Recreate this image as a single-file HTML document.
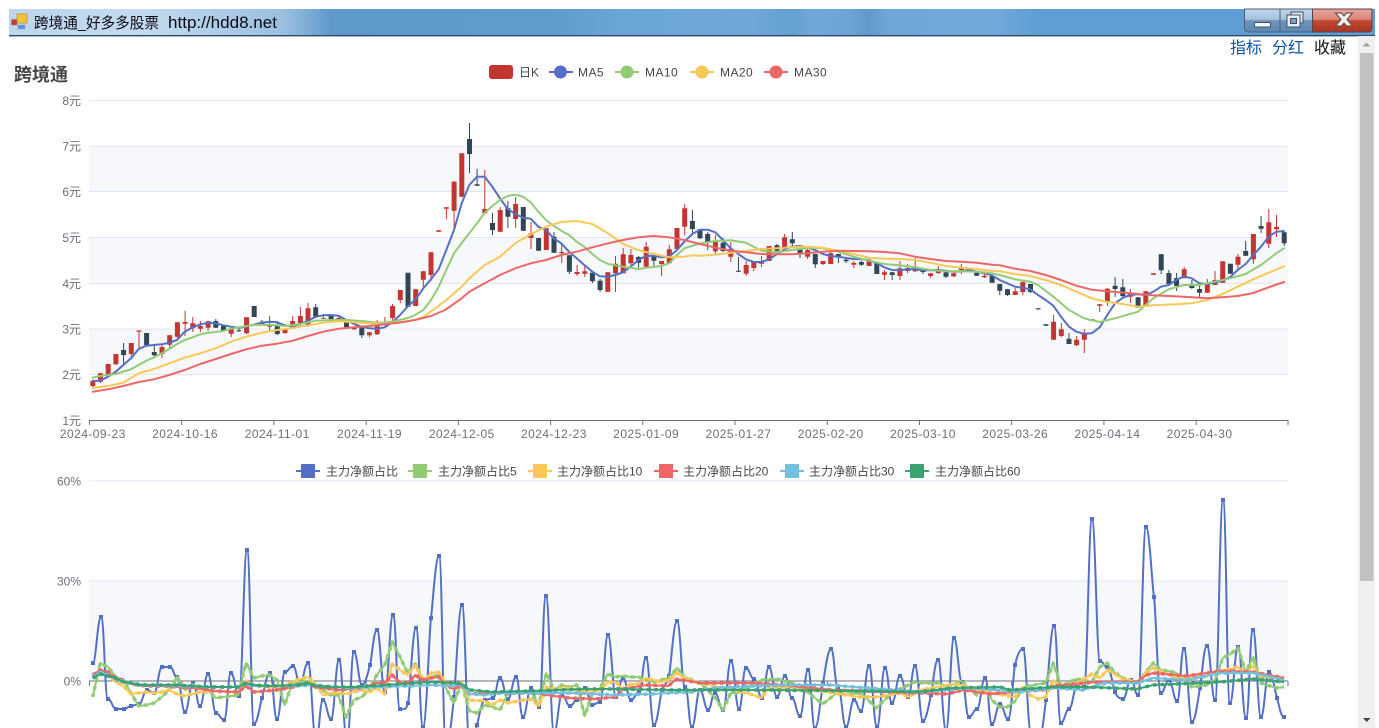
<!DOCTYPE html>
<html lang="zh-CN">
<head>
<meta charset="utf-8">
<title>跨境通_好多多股票</title>
<style>
html,body{margin:0;padding:0;background:#fff;width:1379px;height:728px;overflow:hidden}
svg{display:block;position:absolute;left:0;top:0}
text{font-family:"Liberation Sans","Noto Sans CJK SC",sans-serif}
.ax{font-size:12px;fill:#6e7079}
.lg{font-size:12px;fill:#464646}
.ls{letter-spacing:.45px}
.lk{font-size:16px;font-family:"WenQuanYi Zen Hei","Noto Sans CJK SC",sans-serif}
</style>
</head>
<body>
<svg width="1379" height="728" viewBox="0 0 1379 728" xmlns="http://www.w3.org/2000/svg">
<defs>
<linearGradient id="tb" x1="0" x2="1379" y1="0" y2="0" gradientUnits="userSpaceOnUse">
<stop offset="0" stop-color="#bcd6ec"/>
<stop offset=".1" stop-color="#c4dbef"/>
<stop offset=".205" stop-color="#9cc0e0"/>
<stop offset=".24" stop-color="#5f9acb"/>
<stop offset=".4" stop-color="#5f9bcd"/>
<stop offset=".45" stop-color="#6ba5d8"/>
<stop offset=".545" stop-color="#70a7d9"/>
<stop offset=".575" stop-color="#64a0d2"/>
<stop offset=".59" stop-color="#70a8dc"/>
<stop offset=".615" stop-color="#6ea4d6"/>
<stop offset=".63" stop-color="#6199cb"/>
<stop offset=".645" stop-color="#70a7da"/>
<stop offset=".725" stop-color="#70a8da"/>
<stop offset=".75" stop-color="#5f9ed4"/>
<stop offset="1" stop-color="#5f9ed4"/>
</linearGradient>
<linearGradient id="bb" x1="0" x2="0" y1="0" y2="1">
<stop offset="0" stop-color="#bfd6ea"/><stop offset=".45" stop-color="#a6c2dc"/><stop offset=".5" stop-color="#6f95bb"/><stop offset="1" stop-color="#5b87b4"/>
</linearGradient>
<linearGradient id="bc" x1="0" x2="0" y1="0" y2="1">
<stop offset="0" stop-color="#e6a89f"/><stop offset=".45" stop-color="#d98678"/><stop offset=".5" stop-color="#c54a33"/><stop offset="1" stop-color="#a93522"/>
</linearGradient>
<marker id="mb" markerUnits="userSpaceOnUse" markerWidth="4" markerHeight="4" refX="2" refY="2"><rect width="4" height="4" fill="#5470c6"/></marker>
</defs>

<!-- title bar -->
<rect x="9" y="9" width="1366" height="26" fill="url(#tb)"/>
<rect x="9" y="35" width="1366" height="1.4" fill="#2c4a6b"/>
<rect x="17" y="14" width="10" height="9" fill="#f6c23c" stroke="#b98a20" stroke-width=".7"/>
<rect x="11.5" y="19.5" width="5.5" height="5.5" fill="#d8322a" stroke="#8a8a8a" stroke-width=".6"/>
<rect x="18" y="25" width="7" height="4" fill="#5c8fe0" stroke="#8aa0c8" stroke-width=".5"/>
<text x="34" y="28" font-size="15" fill="#0a0a14" textLength="125" lengthAdjust="spacingAndGlyphs">跨境通_好多多股票</text>
<text x="168" y="28" font-size="16.5" fill="#0a0a14" textLength="109" lengthAdjust="spacingAndGlyphs">http://hdd8.net</text>
<!-- window buttons -->
<path d="M1244.5 9V28q0 4 4 4H1280V9z" fill="url(#bb)" stroke="#4c6078"/>
<rect x="1280" y="9" width="32.5" height="23" fill="url(#bb)" stroke="#4c6078"/>
<path d="M1312.5 9V32H1368q4 0 4-4V9z" fill="url(#bc)" stroke="#5a4048"/>
<rect x="1254.500" y="22.500" width="16" height="4.500" rx="1" fill="#f4f6f8" stroke="#3f5068"/>
<rect x="1291" y="12" width="12" height="11" fill="#dde6ee" stroke="#3f5068"/>
<rect x="1287" y="15" width="13" height="12" fill="#e8eef4" stroke="#3f5068"/>
<rect x="1290.500" y="18.500" width="6" height="5" fill="#7c9cbc" stroke="#3f5068"/>
<path d="M1335.500 13h6l2.500 3 2.500-3h6l-5.500 6.500 5.500 6.500h-6l-2.500-3-2.500 3h-6l5.500-6.500z" fill="#f4f0f0" stroke="#59403c"/>

<!-- links -->
<text class="lk" x="1230" y="53" fill="#0a55a6">指标</text>
<text class="lk" x="1272" y="53" fill="#0a55a6">分红</text>
<text class="lk" x="1314" y="53" fill="#111">收藏</text>

<!-- scrollbar -->
<rect x="1358" y="36" width="17" height="692" fill="#f0f0f0"/>
<rect x="1360" y="53" width="13.500" height="528" fill="#c1c1c1"/>
<path d="M1366.500 42.500l4 4h-8z" fill="#a3a3a3"/>
<path d="M1363 718h7.500l-3.750 4z" fill="#404040"/>

<!-- title -->
<text x="14" y="81" font-size="18" font-weight="700" fill="#464646">跨境通</text>

<!-- top legend -->
<rect x="489" y="65" width="24" height="14" rx="3" fill="#c23531"/>
<text class="lg" x="519" y="76.500">日K</text>
<path d="M549 72h24" stroke="#5470c6" stroke-width="2"/><circle cx="560.500" cy="72" r="6.500" fill="#5470c6"/>
<text class="lg ls" x="578" y="76.500">MA5</text>
<path d="M615 72h24" stroke="#91cc75" stroke-width="2"/><circle cx="627" cy="72" r="6.500" fill="#91cc75"/>
<text class="lg ls" x="645" y="76.500">MA10</text>
<path d="M690 72h24" stroke="#fac858" stroke-width="2"/><circle cx="702" cy="72" r="6.500" fill="#fac858"/>
<text class="lg ls" x="720" y="76.500">MA20</text>
<path d="M764 72h24" stroke="#ee6666" stroke-width="2"/><circle cx="776" cy="72" r="6.500" fill="#ee6666"/>
<text class="lg ls" x="794" y="76.500">MA30</text>

<!-- main chart grid -->
<g fill="#f6f8fc">
<rect x="89" y="146" width="1199" height="45.500"/>
<rect x="89" y="237" width="1199" height="46"/>
<rect x="89" y="329" width="1199" height="45.500"/>
</g>
<path d="M89 100.500H1288M89 146H1288M89 191.500H1288M89 237.500H1288M89 283.500H1288M89 329H1288M89 374.500H1288" stroke="#e0e6f1" fill="none"/>
<path d="M89 420.500H1288M89.500 420v5M181.700 420v5M273.900 420v5M366.200 420v5M458.400 420v5M550.600 420v5M642.800 420v5M735 420v5M827.300 420v5M919.500 420v5M1011.700 420v5M1103.900 420v5M1196.200 420v5M1288 420v5" stroke="#6e7079" fill="none"/>
<g class="ax" text-anchor="end">
<text class="ax" x="81" y="105">8元</text>
<text class="ax" x="81" y="150.500">7元</text>
<text class="ax" x="81" y="196">6元</text>
<text class="ax" x="81" y="242">5元</text>
<text class="ax" x="81" y="288">4元</text>
<text class="ax" x="81" y="333.500">3元</text>
<text class="ax" x="81" y="379">2元</text>
<text class="ax" x="81" y="425">1元</text>
</g>
<g class="ax" text-anchor="middle" letter-spacing=".45">
<text class="ax" x="92.800" y="438">2024-09-23</text>
<text class="ax" x="185.100" y="438">2024-10-16</text>
<text class="ax" x="277.300" y="438">2024-11-01</text>
<text class="ax" x="369.500" y="438">2024-11-19</text>
<text class="ax" x="461.800" y="438">2024-12-05</text>
<text class="ax" x="554" y="438">2024-12-23</text>
<text class="ax" x="646.200" y="438">2025-01-09</text>
<text class="ax" x="738.500" y="438">2025-01-27</text>
<text class="ax" x="830.700" y="438">2025-02-20</text>
<text class="ax" x="922.900" y="438">2025-03-10</text>
<text class="ax" x="1015.200" y="438">2025-03-26</text>
<text class="ax" x="1107.400" y="438">2025-04-14</text>
<text class="ax" x="1199.600" y="438">2025-04-30</text>
</g>

<!-- candle wicks -->
<path stroke="#c23531" stroke-width="1" fill="none" d="M92.8 379.500V389M100.500 373V383M108.200 364V375M115.900 354V365M131.300 343V356.700M139 331V350M162 345V358M169.700 335V349M177.400 322V340M185.100 311V336M192.800 317V332M200.400 321V332M208.100 321V331M231.200 329V337M246.600 317V334M269.600 316V331M285 329V334M292.700 316V328M300.400 307V326M308 303V327M323.400 314V319M338.800 316V322M354.200 327V330M369.500 332V337M377.200 320V335M384.900 317V326M392.600 304V322M400.300 290V303M415.700 289V306M423.300 271V288M431 252V281M438.700 230V232M446.400 207V219M454.100 181V228M461.800 153V197M484.800 170V213M500.200 207V232M515.600 197V228M531 222V249M546.300 228V250M561.700 244V263M577.100 265V276M584.800 265V277M607.800 272V292M615.500 256V292M623.200 248V273M630.900 249V266M646.200 242V267M661.600 261V276M669.300 245V264M677 228V249M684.700 204V235M715.400 235V254M730.800 242V262M746.200 261V276M753.800 262V271M761.500 256V267M769.200 246V261M784.600 234V248M807.600 248V259M823 261V265M830.700 252V264M853.800 261V268M869.100 261V266M884.500 270V280M899.900 261V280M907.600 264V273M915.200 258V272M930.600 273V278M938.300 266V274M953.700 273V277M961.400 264V274M984.400 273V278M1015.200 288V295M1022.800 280V295M1053.600 315V340M1061.300 323V337M1076.600 336V346M1084.300 329V353M1092 319V321M1099.700 304V312M1107.400 288V306M1130.400 289V303M1145.800 291V307M1153.500 273V275M1184.200 267V278M1207.300 279V293M1215 271V285M1222.700 261V283M1238 254V270M1253.400 234V264M1268.800 209V248M1276.500 215V237"/>
<path stroke="#314656" stroke-width="1" fill="none" d="M123.600 343V365M146.600 333V345M154.300 345V357M215.800 319V328M223.500 326V332M238.900 327V332M254.200 306V317M261.900 320V324M277.300 321V335M315.700 304V318M331.100 316V320M346.500 320V327M361.800 327V338M408 273V307M469.500 123V173M477.100 169V186M492.500 213V235M507.900 201V228M523.300 207V231M538.600 238V251M554 232V253M569.400 255V274M592.400 273V283M600.100 279V292M638.600 256V268M653.900 253V268M692.400 210V233M700 229V239M707.700 232V250M723.100 238V252M738.500 257V272M776.900 244V253M792.300 232V246M800 246V258M815.300 254V268M838.400 254V263M846.100 258V263M861.400 261V266M876.800 262V274M892.200 272V280M922.900 270V274M946 272V278M969 268V270M976.700 272V276M992.100 276V283M999.800 284V295M1007.500 289V296M1030.500 284V293M1038.200 308V310M1045.900 324V326M1069 333V344M1115.100 277V297M1122.800 279V298M1138.100 297V308M1161.200 254V274M1168.900 270V285M1176.600 273V291M1191.900 280V289M1199.600 286V297M1230.400 264V274M1245.700 241V256M1261.100 216V233M1284.200 232V246"/>
<!-- candle bodies -->
<path stroke="#c23531" stroke-width="5" fill="none" d="M92.800 381V386M100.500 373.300V381.700M108.200 364V374.300M115.900 354V364.300M131.300 343V354M139 330.500V331.700M162 347V354M169.700 335.300V344.700M177.400 322.300V336.700M185.100 322V323.700M192.800 323.300V328.300M200.400 326V328.700M208.100 321.300V327.700M231.200 329V333.700M246.600 317.300V333.300M269.600 324V326.700M285 329.300V333M292.700 321V328M300.400 316V323.300M308 308.300V326M323.400 318V318.800M338.800 318V320.700M354.200 327.300V329.300M369.500 332.300V335.300M377.200 324V334.300M384.900 322.700V325M392.600 306V318M400.300 290V300M415.700 289.300V306M423.300 271.300V279.700M431 252.300V275M438.700 230.300V231.700M446.400 207.300V208.700M454.100 181.700V210.700M461.800 153.300V196.700M484.800 209V213.300M500.200 210V231.700M515.600 204V219M531 233.300V238M546.300 228.300V250M561.700 252V253.300M577.100 272V274M584.800 271.300V273.700M607.800 272.300V291.700M615.500 263.700V273.300M623.200 254.300V273.300M630.900 255V263.300M646.200 246.700V266.700M661.600 261V264M669.300 249.300V263.300M677 228V249M684.700 208.300V226.700M715.400 241.700V251.300M730.800 248.700V256.700M746.200 265V273.700M753.800 261.700V268M761.500 262.300V263.700M769.200 246V261M784.600 237.300V247.300M807.600 250V256.700M823 261V264M830.700 253.300V264M853.800 263V264.700M869.100 261.300V266M884.500 272.300V274.700M899.900 268.300V276M907.600 268V271M915.200 266.700V271.300M930.600 273.300V276M938.300 270.300V273M953.700 273.300V276.300M961.400 267.300V270M984.400 275.700V277.300M1015.200 291.300V295M1022.800 282V292M1053.600 321.700V339.700M1061.300 329.300V336M1076.600 339.700V345.300M1084.300 333.300V339.700M1092 319V321M1099.700 304.300V305.700M1107.400 288.700V301.700M1130.400 294V296.700M1145.800 291.300V306.700M1153.500 273.300V274.700M1184.200 269.300V278.300M1207.300 283.300V292.700M1215 280V285M1222.700 261.300V282.700M1238 256.700V264.700M1253.400 234V259.300M1268.800 222.300V243.700M1276.500 227V229.300"/>
<path stroke="#314656" stroke-width="5" fill="none" d="M123.600 350V355M146.600 333V345M154.300 352V355.300M215.800 321V327.700M223.500 326V330.700M238.900 330.300V331.300M254.200 306V317M261.900 321.700V324M277.300 325V334M315.700 307.300V317.300M331.100 316V319.300M346.500 320V327.300M361.800 326.700V335.300M408 272.700V306.700M469.500 139V154M477.100 184.300V185.700M492.500 223V230M507.900 208.300V216.700M523.300 207V230.700M538.600 238V250.700M554 236.700V252.700M569.400 255.300V271.700M592.400 272.700V281.300M600.100 280.700V290M638.600 257V262.700M653.900 255V260.700M692.400 221V229M700 229.300V238.300M707.700 234V242.300M723.100 242.700V251M738.500 270.800V271.700M776.900 245.300V250.700M792.300 239.300V243.300M800 246V253.300M815.300 254V264.300M838.400 254V256.700M846.100 259.700V261.300M861.400 262V264.700M876.800 262.300V274M892.200 272.300V275M922.900 270V272M946 272.300V276.700M969 268.300V270M976.700 272.700V275.700M992.100 276V282.700M999.800 284V290.700M1007.500 289.300V295M1030.500 284V292M1038.200 308.300V309.300M1045.900 324.300V325.700M1069 338.700V344M1115.100 285.700V289M1122.800 287.300V296M1138.100 297.300V307.700M1161.200 254.300V270.300M1168.900 273V284M1176.600 278V286M1191.900 285.700V288M1199.600 289V292.700M1230.400 263.700V273.700M1245.700 251V255.700M1261.100 226V228.700M1284.200 232.300V243.300"/>

<!-- MA lines -->
<g fill="none" stroke-width="2" stroke-linejoin="round" stroke-linecap="round">
<polyline stroke="#5470c6" points="92.700,381 100.300,380.700 108,376.700 115.700,371.700 123.300,365 131,358.300 138.700,349 146.300,345.700 154,345 161.700,344.300 169.300,342.700 177,340 184.700,331.700 192.700,327.300 200.300,324.300 208,323 215.700,323.300 223.300,325.300 231,326.700 238.700,327.700 246.300,326.700 254,324.700 261.700,322.700 269.300,321.700 277,322.300 284.700,325.300 292.700,326.300 300.300,324 308,320.700 315.700,316.700 323.300,315.300 331,315 338.700,315.700 346.300,320 354,324 361.700,326.700 369.300,328.300 377,328.700 384.700,327.300 392.600,322 400,315 407.500,306.700 415.700,299.300 423.300,288.300 431,279.300 438.700,269.300 446.300,250 454,230 461.700,203.300 469.300,185 477,176.700 484.700,176.700 492.300,186.700 500,198.300 507.700,209 515.300,214 523,217.700 530.700,218.700 538.300,226.700 546,230 553.700,238.300 561.300,243.300 569,251.700 576.700,258.300 584.300,265 592.300,271.700 600,276.300 608,276.700 615.300,275 623,272.300 630.700,266.700 638.300,260 646,256 653.700,255.700 661.300,257.300 669,256.700 677,250 684.300,241.700 692.300,234 700,229.800 707.700,229.700 715.300,232.300 723,240 730.700,248.300 738.300,254 746,259.300 753.700,262 761.300,262 769,259.300 776.700,254.300 784.300,249.300 792,246.700 799.700,246 807.300,247.300 815,250 822.700,254 830.700,256 838.300,256.700 846,258 853.700,259 861.300,259.300 869,260 876.700,263.300 884.300,267.300 892,270 899.700,270.300 907.300,269.300 915,269.300 923,270.300 930.300,270.300 938,270 946,270.700 953.700,271.700 961.300,271.300 969,270 976.700,271.700 984.300,273.300 992,275.300 999.700,280 1007.300,283.300 1015,286.700 1022.700,287.700 1030.300,289.300 1038,295 1045.700,300 1053.300,305.700 1061,316.700 1069,326.700 1076.300,331.700 1084,333.700 1091.700,333.300 1099.700,327.300 1107.300,315 1115,303.300 1123,297.700 1130.300,295 1138,294.300 1145.700,295 1153.300,291.700 1161,286.700 1168.700,285 1176.300,280 1184,276.300 1191.700,278.300 1199.300,283.300 1207,284 1214.700,282.700 1222.300,280.700 1230,277.300 1237.700,270 1245.700,264 1253.300,255 1261,246.700 1268.700,236.700 1276.300,231.700 1284,231"/>
<polyline stroke="#91cc75" points="92.700,377.700 100.300,376 115.700,374 131,369.300 138.700,365 146.300,360.700 154,357.300 161.700,353.300 169.300,349 177,344 184.700,340 192.700,337.300 200.300,334.300 208,332.700 215.700,332 223.300,331 231,328.700 238.700,327.300 254,325 269.300,324.700 284.700,326 300.300,324 315.700,320.700 331,320 346.300,320 361.700,321 377,322.700 384.700,322.700 392,321.500 400,320 408,318 415,315 423.300,310 431,300 438.700,286.700 446.300,270 454,253.300 461.700,243 469.300,233.300 477,223.300 484.700,212.700 492.300,206 500,200 507.700,196 515.300,194.700 523,196.700 530.700,202.300 538.300,211.700 546,220 553.700,226 561.300,230.700 569,235 576.700,241.700 584.300,246.700 592.300,254 600,260 608,264 615.300,265.300 623,266.700 630.700,267.700 638.300,269.300 646,267.700 653.700,267 661.300,266 669,263.300 677,255 684.300,248.300 692.300,245.700 700,243.500 715.300,241 730.700,240.300 746,242.700 753.700,246.700 761.300,250.700 776.700,252.300 792,250 807.300,248 822.700,248.300 838.300,251.700 853.700,256.700 869,260.700 884.300,264 899.700,265.300 915,267.300 930.300,270 946,271.300 961.300,271.300 976.700,271.700 992,273.300 1000,275 1015,279.300 1030.300,281.700 1038,285 1053.300,296.700 1069,310 1084,318.300 1099.700,322 1115,318.300 1138,311.700 1153.300,298.300 1168.700,289.300 1184,285 1199.300,285 1214.700,281.700 1230,278.300 1245.700,274 1261,265 1276.300,253.300 1284,248.300"/>
<polyline stroke="#fac858" points="92.700,388 108,386 123.300,382.700 138.700,373.300 154,369 169.300,363.300 184.700,357.700 200.300,353.300 215.700,348.300 231,341.700 246.300,336.700 261.700,332.700 277,330 292.700,328 308,325.300 323.300,322.700 338.700,321.300 354,322.300 369.300,323.300 384.700,324 400,322.500 415,320 423,317 433,310 446.300,300 461.700,286.700 469.300,278.300 484.700,265 500,256.700 515.300,243.300 530.700,234.300 546,226.700 561.300,222 576.700,221 592.300,224 608,233.300 623,244 638.300,250 653.700,254 669,257.300 684.300,256.700 692.300,255.300 700,255.800 715.300,254.700 730.700,252.700 746,251 761.300,249 776.700,248.300 792,247.300 807.300,246.700 822.700,247.700 838.300,250.700 853.700,254 869,257.700 884.300,258.700 899.700,259 915,260 930.300,262.700 946,266 961.300,267.700 976.700,269 992,271 1000,271.300 1015,274 1030.300,276 1045.700,280 1061,285 1076.300,291.700 1091.700,298.300 1107.300,302 1123,304 1138,306.700 1153.300,305.300 1176.300,304.300 1191.700,303.300 1207,300 1222.300,294 1237.700,286.700 1253.300,279.300 1268.700,272.700 1284,266.300"/>
<polyline stroke="#ee6666" points="92.700,391.700 108,389.300 123.300,386 138.700,382 154,379.300 169.300,375 184.700,370 200.300,364 215.700,359 231,354 246.300,349.300 261.700,345.700 277,343.700 292.700,340.700 308,336 323.300,331.700 338.700,328.700 354,327.300 369.300,326 384.700,324.300 400,322.500 415,320 431,316 445,310 461.700,298.300 469.300,291.700 484.700,283.300 500,275 515.300,268.300 530.700,263.300 546,260 561.300,255 576.700,251.700 592.300,247.300 608,243.300 623,240 638.300,237.300 653.700,236 669,237.300 684.300,240 700,244 715.300,247.700 730.700,250.700 746,252.300 761.300,254 776.700,254.300 792,254.300 807.300,253.300 822.700,251.700 838.300,250.700 853.700,251 869,251.300 884.300,252 899.700,253.300 915,256.700 930.300,259 946,261 961.300,261.700 976.700,262.700 992,264.700 1000,265.300 1015,268.700 1030.300,271 1045.700,275 1061,280 1076.300,285.700 1091.700,289.700 1107.300,291.300 1130.300,293.300 1153.300,295.300 1184,296.700 1207,298.300 1222.300,297.300 1237.700,296 1253.300,293 1268.700,287.300 1284,282"/>
</g>

<!-- lower legend -->
<path d="M296 471h24" stroke="#5470c6" stroke-width="2"/><rect x="301" y="464" width="14" height="14" fill="#5470c6"/>
<text class="lg" x="326" y="475.500">主力净额占比</text>
<path d="M408 471h24" stroke="#91cc75" stroke-width="2"/><rect x="413" y="464" width="14" height="14" fill="#91cc75"/>
<text class="lg" x="438" y="475.500">主力净额占比5</text>
<path d="M528 471h24" stroke="#fac858" stroke-width="2"/><rect x="533" y="464" width="14" height="14" fill="#fac858"/>
<text class="lg" x="557" y="475.500">主力净额占比10</text>
<path d="M654 471h24" stroke="#ee6666" stroke-width="2"/><rect x="659" y="464" width="14" height="14" fill="#ee6666"/>
<text class="lg" x="683" y="475.500">主力净额占比20</text>
<path d="M780 471h24" stroke="#73c0de" stroke-width="2"/><rect x="785" y="464" width="14" height="14" fill="#73c0de"/>
<text class="lg" x="809" y="475.500">主力净额占比30</text>
<path d="M905 471h24" stroke="#3ba272" stroke-width="2"/><rect x="910" y="464" width="14" height="14" fill="#3ba272"/>
<text class="lg" x="935" y="475.500">主力净额占比60</text>

<!-- lower chart grid -->
<rect x="89" y="581" width="1199" height="100" fill="#f6f8fc"/>
<path d="M89 481H1288M89 581H1288" stroke="#e0e6f1" fill="none"/>
<text class="ax" x="81" y="485.500" text-anchor="end">60%</text>
<text class="ax" x="81" y="585.500" text-anchor="end">30%</text>
<text class="ax" x="81" y="685.500" text-anchor="end">0%</text>
<path d="M89 681H1288M89.500 681v5M181.700 681v5M273.900 681v5M366.200 681v5M458.400 681v5M550.600 681v5M642.800 681v5M735 681v5M827.300 681v5M919.500 681v5M1011.700 681v5M1103.900 681v5M1196.200 681v5M1288 681v5" stroke="#6e7079" fill="none"/>

<!-- lower lines -->
<path fill="none" stroke="#5470c6" stroke-width="2" marker-start="url(#mb)" marker-mid="url(#mb)" marker-end="url(#mb)" d="M93 663C96 663 97.500 617 101 617S104.500 699 108 699S112.500 709 116 709S120.500 709 124 709S127.500 706 131 706S135.500 704 139 704S143.500 690 147 690S150.500 693 154 693S158.500 667 162 667S166.500 667 170 667S173.500 677 177 677S181.500 712 185 712S189.500 683 193 683S196.500 706 200 706S204.500 674 208 674S212.500 713 216 713S220.500 720 224 720S227.500 673 231 673S235.500 696 239 696S243.500 550 247 550S250.500 724 254 724S260 704 262 698S266.500 673 270 673S273.500 719 277 719S281.500 672 285 672S289.500 666 293 666S296.500 683 300 683S304.500 663 308 663S312.500 740 316 740S319.500 700 323 700S327.500 719 331 719S335.500 660 339 660S343.500 740 347 740S350.500 652 354 652S358.500 685 362 685S368 672 370 665S373.500 630 377 630S381.500 692 385 692S389.500 615 393 615S396.500 709 400 709S406 711 408 703S412.500 628 416 628S419.500 727 423 727S429 634 431 618S435.500 556 439 556S442.500 745 446 745S452 715 454 697S458.500 605 462 605S466.500 750 470 750S475 732 477 725S481.500 700 485 700S489.500 698 493 698S496.500 678 500 678S504.500 699 508 699S512.500 677 516 677S519.500 717 523 717S527.500 688 531 688S535.500 707 539 707S542.500 596 546 596S550.500 733 554 733S558.500 695 562 695S566.500 706 570 706S573.500 700 577 700S581.500 688 585 688S588.500 705 592 705S596.500 702 600 702S604.500 635 608 635S612.500 697 616 697S619.500 678 623 678S627.500 700 631 700S635.500 692 639 692S642.500 658 646 658S650.500 725 654 725S660 696 662 690S667 685 669 676S673.500 621 677 621S681.500 687 685 687S688.500 727 692 727S696.500 690 700 690S704.500 710 708 710S711.500 693 715 693S719.500 710 723 710S727.500 661 731 661S735.500 709 739 709S742.500 668 746 668S750.500 679 754 679S758.500 698 762 698S765.500 667 769 667S773.500 697 777 697S781.500 676 785 676S788.500 698 792 698S796.500 716 800 716S804.500 670 808 670S811.500 728 815 728S821 693 823 683S827.500 649 831 649S834.500 687 838 687S842.500 727 846 727S850.500 700 854 700S857.500 711 861 711S865.500 666 869 666S873.500 727 877 727S881.500 668 885 668S888.500 703 892 703S896.500 676 900 676S904.500 697 908 697S911.500 666 915 666S919.500 721 923 721S929 703 931 695S934.500 660 938 660S942.500 730 946 730S950.500 638 954 638S958.500 682 962 682S965.500 717 969 717S973.500 709 977 709S981.500 678 985 678S988.500 724 992 724S996.500 704 1000 704S1004.500 719 1008 719S1013 674 1015 665S1019.500 649 1023 649S1027.500 732 1031 732S1034.500 743 1038 743S1044 715 1046 700S1050.500 626 1054 626S1057.500 723 1061 723S1065.500 709 1069 709S1073.500 687 1077 687S1080.500 687 1084 687S1088.500 519 1092 519S1096.500 661 1100 661S1103.500 667 1107 667S1113 687 1115 692S1119.500 699 1123 699S1127.500 680 1131 680S1134.500 695 1138 695S1142.500 527 1146 527S1152 585 1154 597S1157.500 693 1161 693S1165.500 680 1169 680S1173.500 701 1177 701S1180.500 649 1184 649S1188.500 722 1192 722S1198 698 1200 688S1203.500 646 1207 646S1211.500 700 1215 700S1219.500 500 1223 500S1226.500 703 1230 703S1234.500 647 1238 647S1242.500 718 1246 718S1249.500 630 1253 630S1257.500 717 1261 717S1265.500 672 1269 672S1275 692 1277 698S1280.500 717 1284 717"/>

<defs>
<path id="l5" d="M92.700 697L100.300 663 108 667 115.700 677 123.300 680 131 693 138.700 706 146.300 705 154 703 161.700 697 169.300 690 177 677 184.700 690 192.300 685 200 687 207.700 690 215.300 698 223 697 230.700 696 238.300 695 246 663 254 678 261.700 676 269.300 675 277 680 284.700 705 292.300 683 300 682 307.700 681 315.300 687 323 690 330.700 695 338.300 695 346 717 353.700 700 361.700 697 369.300 690 376.700 675 384.700 665 392.300 642 400 657 407.700 673 415.300 664 423.300 680 431 677 438.700 675 446 688 453.700 703 461.700 683 469.300 711 477 713 484.700 705 492.300 707 500 710 508 693 515.700 692 531 692 538.700 705 546.300 673 554 690 561.700 685 569.300 687 577 685 584.700 716 592.300 693 600 688 607.700 674 615.300 677 623 676 630.700 677 638.300 677 646 680 653.700 682 669 678 677 668 684.700 677 700 683 707.700 690 715.300 698 723 710 730.700 693 738.300 693 746 688 761.300 680 776.700 679 792 683 807.300 692 822.700 704 838 692 845.700 695 861 693 876.300 708 891.700 693 914.700 682 923 683 938.300 683 946 687 961.300 681 976.700 695 984.300 687 992 700 999.700 707 1007.300 707 1015 701 1022.700 687 1045.700 683 1053.300 663 1061.300 687 1069 682 1076.700 679 1092 682 1099.700 667 1107.300 663 1115 673 1130.300 682 1138 682 1145.700 672 1153.300 663 1161 670 1168.700 671 1176.300 673 1191.700 687 1207 685 1215 680 1222.700 658 1230.300 654 1238 648 1245.700 672 1253.300 657 1261 683 1276.300 688 1284 687"/>
<path id="l10" d="M92.700 678L100.300 672 108 675 115.700 682 123.300 686 131 694 138.700 693 146.300 692 154 693 161.700 692 169.300 690 177 694 184.700 696 192.300 694 200 692 207.700 692 215.300 691 230.700 692 238.300 692 246 681 254 685 277 688 284.700 685 292.300 682 300 679 307.700 677 315.300 683 323 695 330.700 693 338.300 693 346 694 361.700 690 369.300 692 376.700 688 384.700 694 392.300 664 400 670 407.700 675 415.300 665 423.300 681 431 673 438.700 672 446 683 453.700 688 461.700 683 469.300 700 484.700 701 492.300 705 500 700 508 703 523.300 700 531 699 538.700 706 546.300 687 554 689 569.300 688 584.700 692 600 690 607.700 682 615.300 682 623 689 630.700 684 638.300 684 646 678 661.300 682 669 680 677 673 684.700 678 700 683 733.300 690 753.300 695 761.300 698 769 688 793.300 687 813.300 690 846.700 695 860 697 876.700 697 900 693 908.300 697 920 690 953.300 684 970 687 991.700 693 1015 697 1022.700 687 1030 695 1038.300 699 1045.700 697 1053.300 680 1061.300 687 1076.700 683 1092 674 1100 678 1107.300 670 1123.300 679 1138.300 682 1146.700 672 1153.300 668 1176.700 678 1206.700 676 1221.700 671 1238.300 667 1245.700 673 1253.300 666 1261 677 1284 678"/>
<path id="l20" d="M92.700 675L100.300 670 108 672 115.700 678 123.300 680 131 684 146.300 686 161.700 686 177 687 193.300 688 215 691 238.300 692 246 686 254 692 276.700 690 293.300 687 307.700 683 315.300 687 338.300 690 361.700 688 376.700 683 384.700 683 392.300 675 400 683 407.700 683 415.300 675 423.300 680 431 678 438.700 677 446 685 453.700 689 461.700 685 469.300 694 500 693 538.300 693 546.700 695 570 698 593.300 699 616.700 697 623.300 689 646.700 685 668.300 686 676.700 679 700 683 753.300 683 783.300 685 833.300 690 920 693 946.700 694 963.300 690 990 694 1013.300 692 1043.300 690 1053.300 686 1096.700 682 1136.700 682 1146.700 675 1153.300 673 1186.700 676 1220 671 1253.300 672 1284 678"/>
<path id="l30" d="M92.700 677L100.300 672 108 675 115.700 679 131 683 146.300 685 177 686 208 687 238.300 687 246 684 254 686 293.300 686 315.300 685 346.700 688 377 687 407.700 686 431 685 453.700 686 461.700 684 469.300 694 484.700 695 500 693 576.700 693 615.300 695 653.300 694 668.300 693 691.700 692 713.300 688 753.300 686 793.300 685 830 685 866.700 688 920 692 970 688 1020 692 1053.300 688 1083.300 690 1103.300 683 1136.700 683 1153.300 678 1186.700 680 1220 673 1253.300 673 1284 680"/>
<path id="l60" d="M92.700 678L100.300 674 108 676 115.700 678 123.300 682 131 683 138.700 685 177 685 193.300 686 208 687 238.300 687 246 683 254 685 270 686 300 685 308 683 316 686 331 687 354 687 385 685 431 682 454 683 462 684 470 690 493 692 500 691.700 531 691 585 689 616 689 669 690 770 690 920 691.700 953.300 688 1000 687 1010 690 1053.300 687 1086.700 687 1136.700 689 1153.300 685 1220 682 1253.300 679 1284 682"/>
</defs>
<g fill="none" stroke="#91cc75" stroke-linejoin="round"><use href="#l5" stroke-width="2"/><use href="#l5" stroke-width="3.500" stroke-dasharray="3.500 4.190"/></g>
<g fill="none" stroke="#fac858" stroke-linejoin="round"><use href="#l10" stroke-width="2"/><use href="#l10" stroke-width="3.500" stroke-dasharray="3.500 4.190"/></g>
<g fill="none" stroke="#ee6666" stroke-linejoin="round"><use href="#l20" stroke-width="2"/><use href="#l20" stroke-width="3.500" stroke-dasharray="3.500 4.190"/></g>
<g fill="none" stroke="#73c0de" stroke-linejoin="round"><use href="#l30" stroke-width="2"/><use href="#l30" stroke-width="3.500" stroke-dasharray="3.500 4.190"/></g>
<g fill="none" stroke="#3ba272" stroke-linejoin="round"><use href="#l60" stroke-width="2"/><use href="#l60" stroke-width="3.500" stroke-dasharray="3.500 4.190"/></g>
</svg>
</body>
</html>
